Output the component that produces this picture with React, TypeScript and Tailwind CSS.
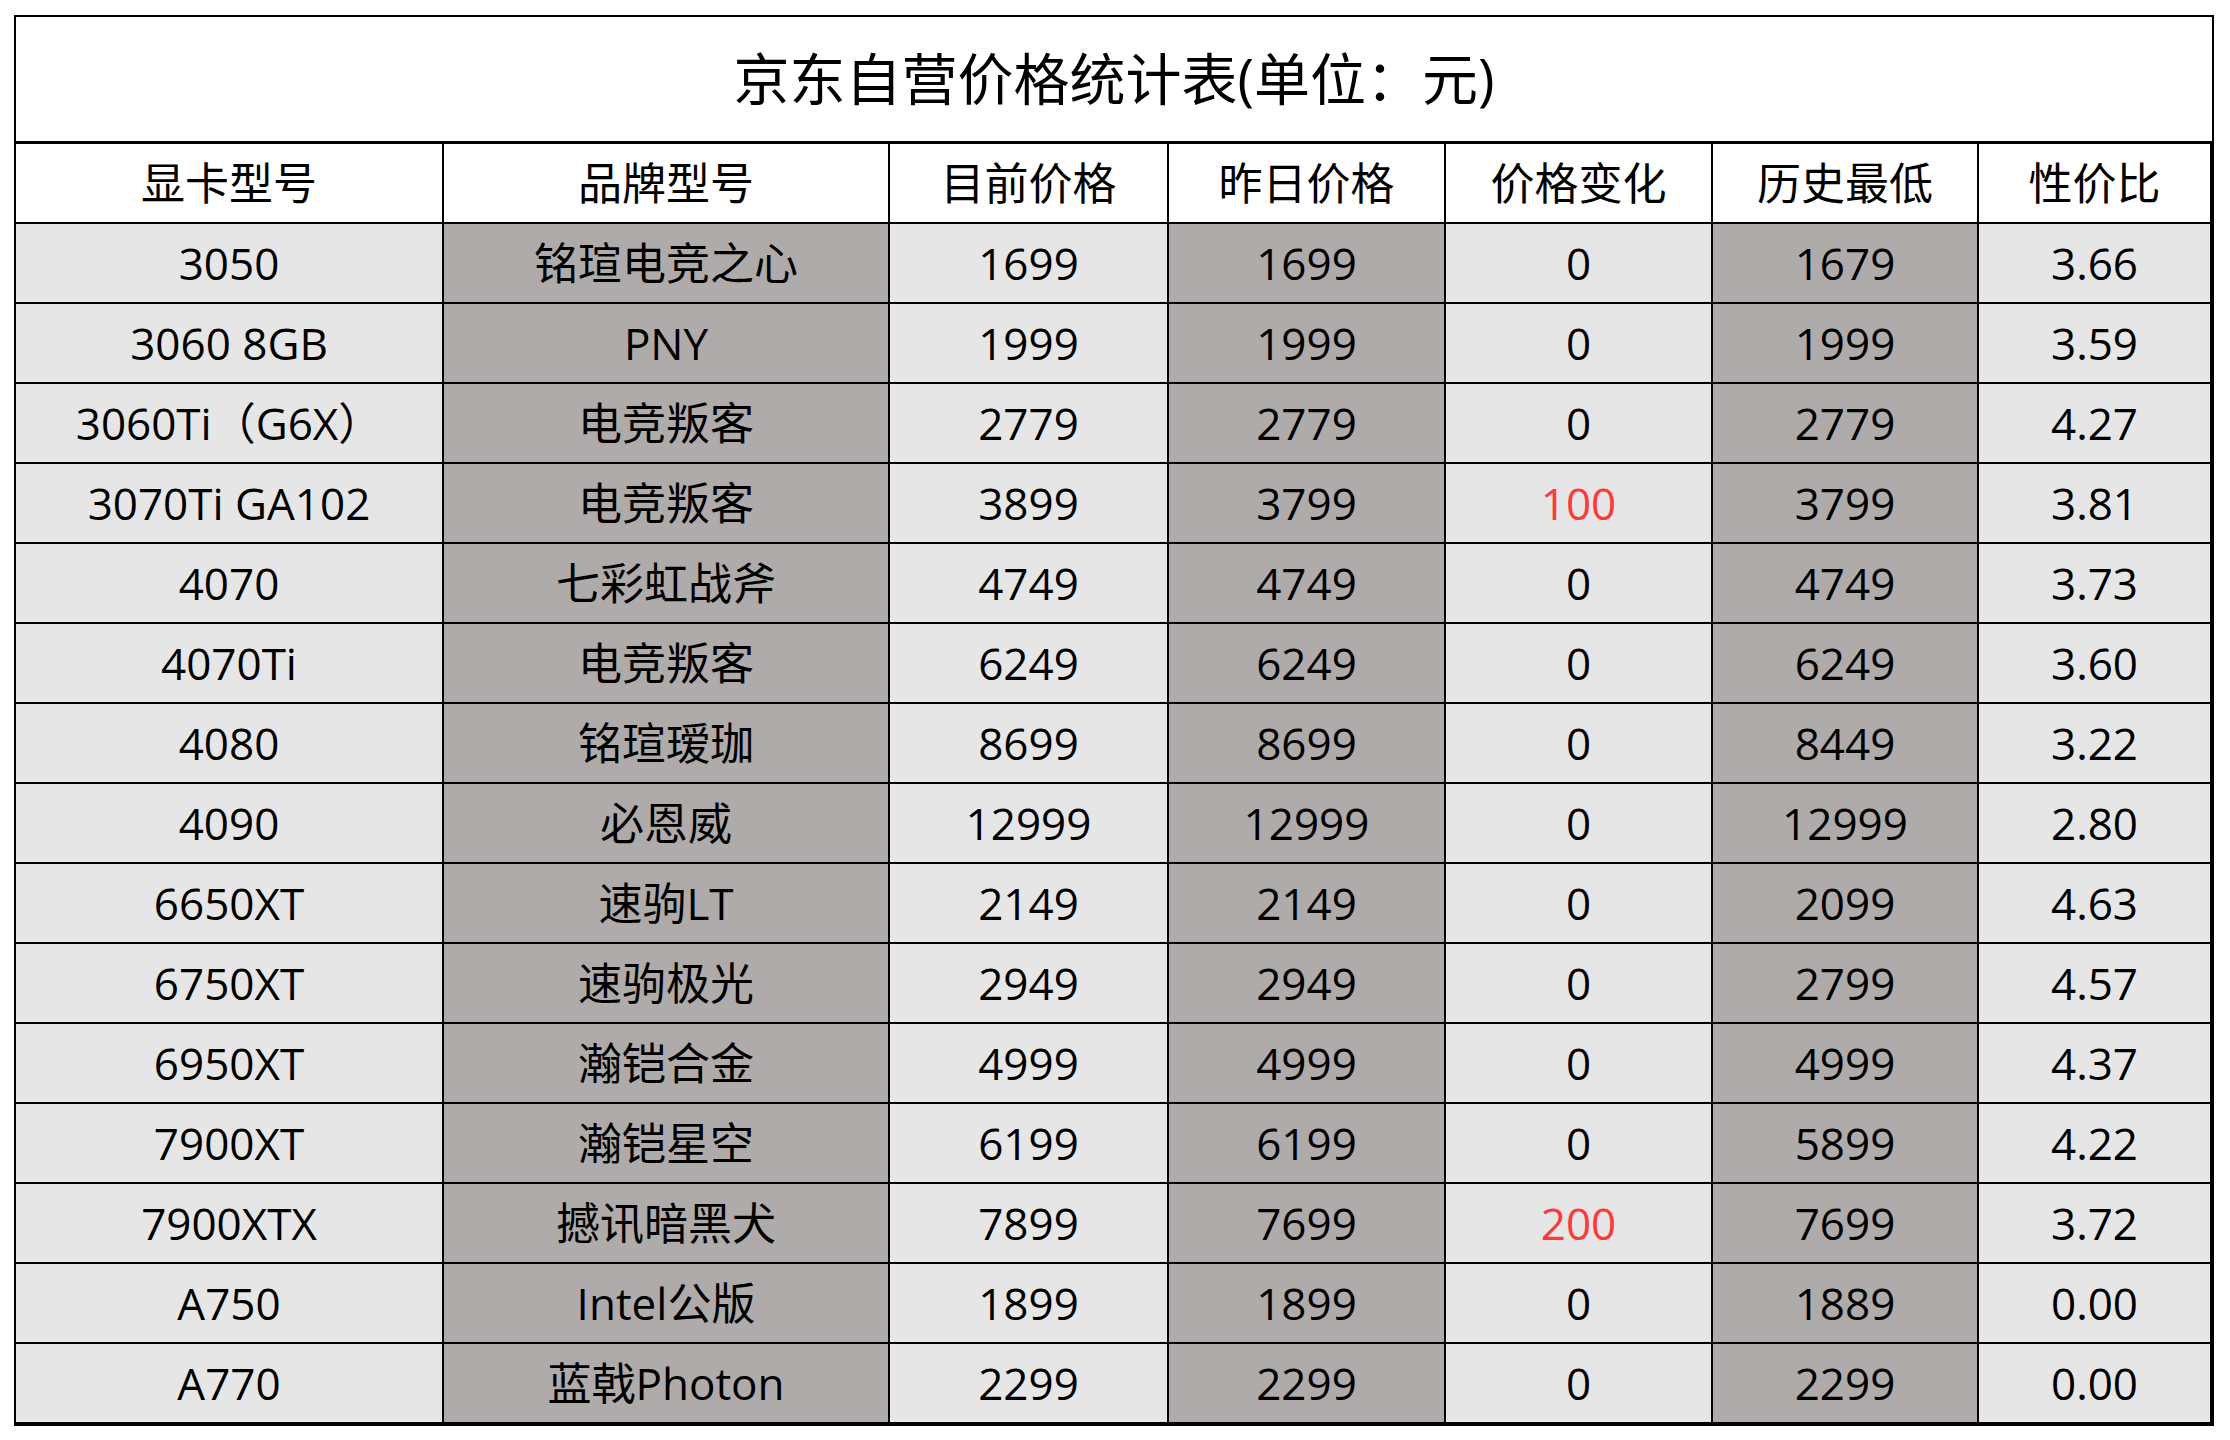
const columns = ['显卡型号', '品牌型号', '目前价格', '昨日价格', '价格变化', '历史最低', '性价比'];

// widths include each cell's 2px right border
const colWidths = ['w-[428px]', 'w-[446px]', 'w-[279px]', 'w-[277px]', 'w-[267px]', 'w-[266px]', 'w-[233px]'];

type Row = [string, string, string, string, string, string, string];

const rows: Row[] = [
  ['3050', '铭瑄电竞之心', '1699', '1699', '0', '1679', '3.66'],
  ['3060 8GB', 'PNY', '1999', '1999', '0', '1999', '3.59'],
  ['3060Ti（G6X）', '电竞叛客', '2779', '2779', '0', '2779', '4.27'],
  ['3070Ti GA102', '电竞叛客', '3899', '3799', '100', '3799', '3.81'],
  ['4070', '七彩虹战斧', '4749', '4749', '0', '4749', '3.73'],
  ['4070Ti', '电竞叛客', '6249', '6249', '0', '6249', '3.60'],
  ['4080', '铭瑄瑷珈', '8699', '8699', '0', '8449', '3.22'],
  ['4090', '必恩威', '12999', '12999', '0', '12999', '2.80'],
  ['6650XT', '速驹LT', '2149', '2149', '0', '2099', '4.63'],
  ['6750XT', '速驹极光', '2949', '2949', '0', '2799', '4.57'],
  ['6950XT', '瀚铠合金', '4999', '4999', '0', '4999', '4.37'],
  ['7900XT', '瀚铠星空', '6199', '6199', '0', '5899', '4.22'],
  ['7900XTX', '撼讯暗黑犬', '7899', '7699', '200', '7699', '3.72'],
  ['A750', 'Intel公版', '1899', '1899', '0', '1889', '0.00'],
  ['A770', '蓝戟Photon', '2299', '2299', '0', '2299', '0.00'],
];

function Cell({ i, children, shaded, red }: { i: number; children: React.ReactNode; shaded?: boolean; red?: boolean }) {
  const bg = shaded === undefined ? 'bg-white' : shaded ? 'bg-[#afabab]' : 'bg-[#e7e6e6]';
  return (
    <div
      className={`${colWidths[i]} ${bg} ${red ? 'text-[#ff3838]' : 'text-black'} flex shrink-0 items-center justify-center whitespace-nowrap border-r-2 border-black`}
    >
      {children}
    </div>
  );
}

export default function App() {
  return (
    <div className="h-[1440px] w-[2230px] bg-white pl-[14px] pt-[15px] font-['Open_Sans','Noto_Sans_CJK_SC',sans-serif] text-[44px] leading-none">
      <div className="w-[2200px] border-2 border-black">
        <div className="flex h-[127px] items-center justify-center border-b-[3px] border-black pb-[2px] text-[56px] text-black">
          京东自营价格统计表(单位：元)
        </div>
        <div className="flex h-[80px] border-b-2 border-black">
          {columns.map((c, i) => (
            <Cell key={c} i={i}>
              {c}
            </Cell>
          ))}
        </div>
        {rows.map((r) => (
          <div key={r[0]} className="flex h-[80px] border-b-2 border-black">
            {r.map((v, i) => (
              <Cell key={i} i={i} shaded={i % 2 === 1} red={i === 4 && v !== '0'}>
                {v}
              </Cell>
            ))}
          </div>
        ))}
      </div>
    </div>
  );
}
